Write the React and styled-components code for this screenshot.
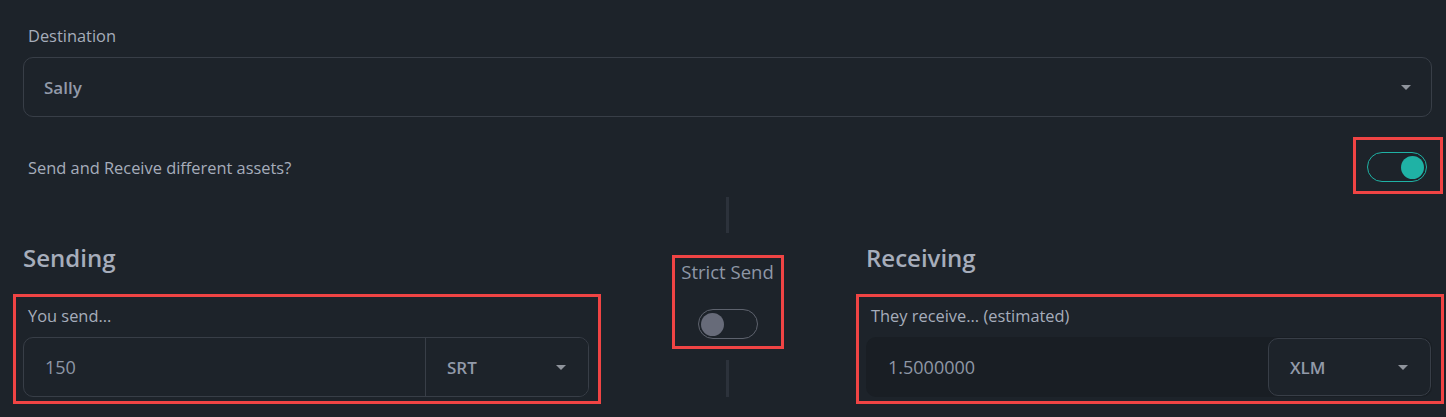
import React from 'react'
import styled, { createGlobalStyle } from 'styled-components'

const Global = createGlobalStyle`
  html, body {
    margin: 0;
    background: #1d232a;
  }
  body {
    font-family: "Open Sans", "Noto Sans", sans-serif;
    color: #a6adbb;
  }
`

const Page = styled.div`
  padding: 26px 14px 0 23px;
  height: 417px;
  box-sizing: border-box;
`

const Label = styled.div`
  font-size: 16.4px;
  line-height: 20px;
  padding-left: 5px;
  margin-bottom: 11px;
  color: #a6adbb;
`

const SelectBox = styled.div`
  height: 60px;
  box-sizing: border-box;
  border: 1px solid #383e47;
  border-radius: 10px;
  display: flex;
  align-items: center;
  justify-content: space-between;
  padding: 0 20px 0 20px;
  font-size: 17px;
  font-weight: 600;
  color: #929aa9;
`

const Caret = styled.span`
  width: 0;
  height: 0;
  border-left: 5px solid transparent;
  border-right: 5px solid transparent;
  border-top: 5px solid #8f949c;
`

const Row = styled.div`
  display: flex;
  align-items: center;
  justify-content: space-between;
  margin-top: 35px;
  height: 30px;
  padding: 0 5px;
  font-size: 16.4px;
`

const Marked = styled.div`
  position: relative;
  &::after {
    content: '';
    position: absolute;
    top: ${p => p.$t}px;
    left: ${p => p.$l}px;
    right: ${p => p.$r}px;
    bottom: ${p => p.$b}px;
    border: 3px solid #f04444;
    pointer-events: none;
  }
`

const Toggle = styled.div`
  width: 60px;
  height: 30px;
  box-sizing: border-box;
  border-radius: 15px;
  border: 1.5px solid ${p => p.$on ? '#1fb2a5' : '#5d626d'};
  display: flex;
  align-items: center;
  justify-content: ${p => p.$on ? 'flex-end' : 'flex-start'};
  padding: 0 2.5px;
  &::before {
    content: '';
    width: 23px;
    height: 23px;
    border-radius: 50%;
    background: ${p => p.$on ? '#1fb2a5' : '#676b79'};
  }
`

const Columns = styled.div`
  display: grid;
  grid-template-columns: 1fr 277px 1fr;
  margin-top: 15px;
  height: 200px;
`

const Side = styled.div`
  display: flex;
  flex-direction: column;
  justify-content: flex-end;
`

const Heading = styled.h2`
  margin: 0 0 32px;
  font-size: 24px;
  line-height: 32px;
  font-weight: 600;
  color: #a6adbb;
`

const Group = styled.div`
  display: flex;
  height: 60px;
  box-sizing: border-box;
  border-radius: 10px;
  border: 1px solid ${p => p.$disabled ? 'transparent' : '#383e47'};
  background: ${p => p.$disabled ? '#191e24' : 'transparent'};
  overflow: hidden;
`

const Amount = styled.div`
  flex: 1;
  display: flex;
  align-items: center;
  padding-left: 21px;
  font-size: 18px;
  color: #8e97a6;
`

const Asset = styled.div`
  width: 163px;
  box-sizing: border-box;
  display: flex;
  align-items: center;
  justify-content: space-between;
  padding: 0 22px 0 21px;
  font-size: 17px;
  font-weight: 600;
  color: #929aa9;
  background: #1d232a;
  border-left: 1px solid #383e47;
  ${p => p.$boxed && `
    border: 1px solid #383e47;
    border-radius: 10px;
  `}
`

const Middle = styled.div`
  display: flex;
  flex-direction: column;
  align-items: center;
`

const Rule = styled.div`
  width: 3px;
  height: ${p => p.$h}px;
  background: #2c323b;
`

const StrictBox = styled.div`
  width: 112px;
  height: 94px;
  box-sizing: border-box;
  margin: 22px 0 11px;
  border: 3px solid #f04444;
  display: flex;
  flex-direction: column;
  align-items: center;
  justify-content: space-between;
  padding: 3px 0 7px;
  font-size: 18.5px;
  line-height: 22px;
  color: #8e97a6;
  white-space: nowrap;
`

const Field = ({ label, amount, asset, disabled }) => (
  <Marked $t={-12} $l={-10} $r={-12} $b={-7}>
    <Label>{label}</Label>
    <Group $disabled={disabled}>
      <Amount>{amount}</Amount>
      <Asset $boxed={disabled}>
        {asset}
        <Caret />
      </Asset>
    </Group>
  </Marked>
)

export default function App() {
  return (
    <Page>
      <Global />
      <Label>Destination</Label>
      <SelectBox>
        Sally
        <Caret />
      </SelectBox>

      <Row>
        Send and Receive different assets?
        <Marked $t={-15} $l={-14} $r={-16} $b={-12}>
          <Toggle $on />
        </Marked>
      </Row>

      <Columns>
        <Side>
          <Heading>Sending</Heading>
          <Field label='You send...' amount='150' asset='SRT' />
        </Side>
        <Middle>
          <Rule $h={36} />
          <StrictBox>
            Strict Send
            <Toggle />
          </StrictBox>
          <Rule $h={37} />
        </Middle>
        <Side>
          <Heading>Receiving</Heading>
          <Field label='They receive... (estimated)' amount='1.5000000' asset='XLM' disabled />
        </Side>
      </Columns>
    </Page>
  )
}
